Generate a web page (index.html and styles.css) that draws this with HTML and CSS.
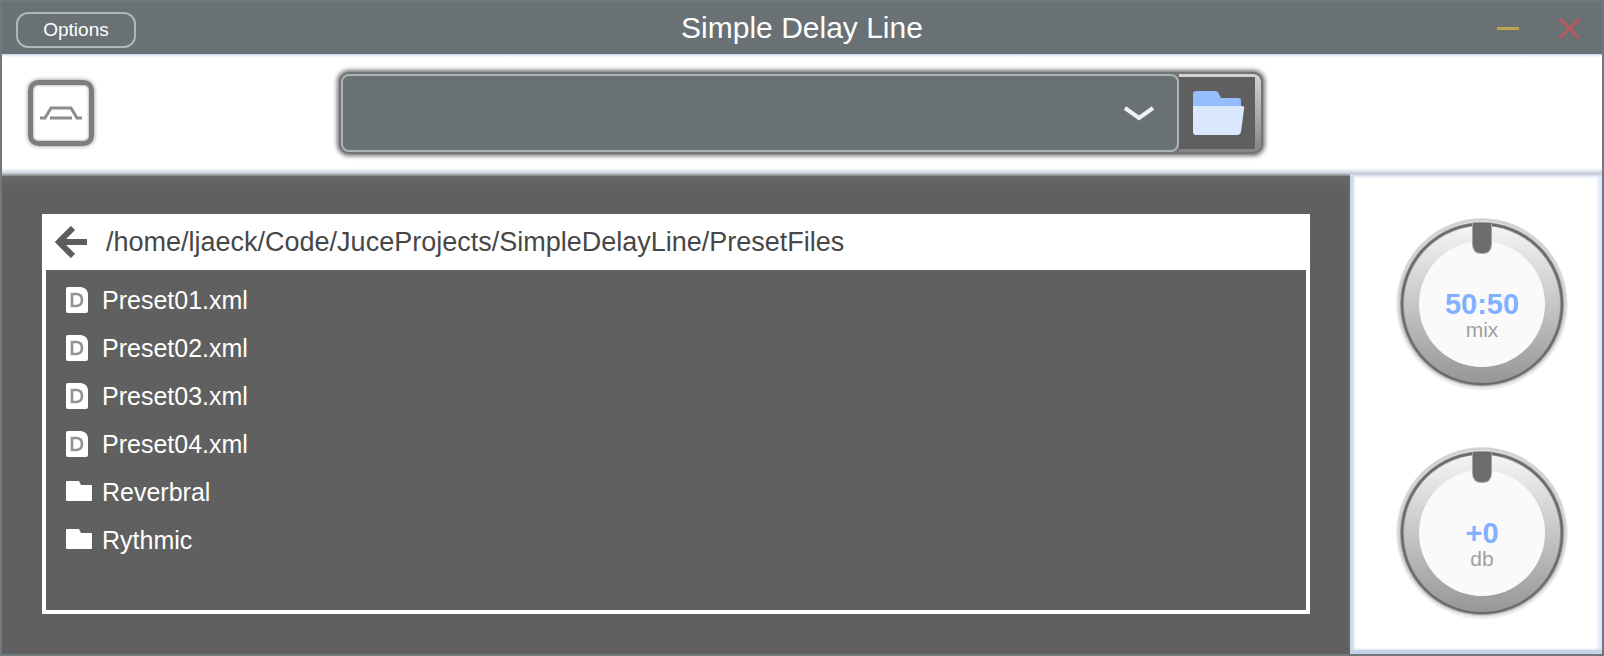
FILE: index.html
```html
<!DOCTYPE html>
<html lang="en">
<head>
<meta charset="utf-8">
<title>Simple Delay Line</title>
<link rel="stylesheet" href="styles.css">
</head>
<body>
<svg class="defs" aria-hidden="true">
  <defs>
    <linearGradient id="rim" x1="0" y1="0" x2="0" y2="1">
      <stop offset="0" stop-color="#f6f6f6"/>
      <stop offset="1" stop-color="#969696"/>
    </linearGradient>
    <symbol id="doc" viewBox="0 0 22 26">
      <path d="M2 0H15Q22 1 22 8V24Q22 26 20 26H2Q0 26 0 24V2Q0 0 2 0Z" fill="#fff"/>
      <path d="M6 7H10Q16 7 16 13Q16 19 10 19H6Z" fill="none" stroke="#939393" stroke-width="2.6"/>
    </symbol>
    <symbol id="folder" viewBox="0 0 26 20">
      <path d="M1 0H13L15 4H25Q26 4 26 5V19Q26 20 25 20H1Q0 20 0 19V1Q0 0 1 0Z" fill="#fff"/>
    </symbol>
    <symbol id="dial" viewBox="0 0 176 176">
      <circle cx="88" cy="88" r="84.5" fill="none" stroke="#eeeeee" stroke-width="3"/>
      <circle cx="88" cy="87" r="83" fill="none" stroke="#d2d2d2" stroke-width="3"/>
      <circle cx="88" cy="88" r="80" fill="url(#rim)" stroke="#a0a0a0" stroke-width="4"/>
      <circle cx="88" cy="88" r="80" fill="none" stroke="#6c6c6c" stroke-width="2.4"/>
      <circle cx="88" cy="88" r="63" fill="#fafafa"/>
      <path d="M78 7H98V28Q98 38 88 38Q78 38 78 28Z" fill="#a5a5a5"/>
      <path d="M79 7H97V28Q97 37 88 37Q79 37 79 28Z" fill="#6c6c6c"/>
    </symbol>
  </defs>
</svg>
<div class="window">
  <header class="titlebar">
    <button class="options" type="button">Options</button>
    <h1 class="title">Simple Delay Line</h1>
    <div class="controls">
      <button class="control" type="button" aria-label="Minimize"><svg width="22" height="22" viewBox="0 0 22 22"><path d="M0 11.5H22" stroke="#bda650" stroke-width="3"/></svg></button>
      <button class="control" type="button" aria-label="Close"><svg width="22" height="22" viewBox="0 0 22 22"><path d="M1 2L20 21M20 2L1 21" stroke="#bd5660" stroke-width="2.6"/></svg></button>
    </div>
  </header>
  <div class="toolbar">
    <button class="shape" type="button" aria-label="Filter shape">
      <svg width="44" height="16" viewBox="0 0 44 16"><path d="M1 13H6L12 3H32L38 13H43M11 13H33" fill="none" stroke="#8c8c8c" stroke-width="3"/></svg>
    </button>
    <div class="picker">
      <div class="combo">
        <select class="presets" aria-label="Preset"><option value=""></option></select>
        <svg class="chevron" width="32" height="16" viewBox="0 0 32 16"><path d="M2 3L16 13L30 3" fill="none" stroke="#f0f1f1" stroke-width="4"/></svg>
      </div>
      <button class="browse" type="button" aria-label="Browse presets">
        <svg width="52" height="44" viewBox="0 0 52 44"><path d="M3 0H23Q25 0 26 3L28 7H45Q48 7 48 10V20H0V3Q0 0 3 0Z" fill="#93bdfd"/><path d="M0 15H49Q52 15 51 18L48 41Q47 44 45 44H3Q0 44 0 41Z" fill="#dbe9fe"/></svg>
      </button>
    </div>
  </div>
  <div class="body">
    <main class="main">
      <section class="browser">
        <div class="pathbar">
          <button class="back" type="button" aria-label="Parent folder"><svg width="32" height="32" viewBox="0 0 32 32"><path d="M32 16H5M18 2L4 16L18 30" fill="none" stroke="#5d5d5d" stroke-width="6"/></svg></button>
          <span>/home/ljaeck/Code/JuceProjects/SimpleDelayLine/PresetFiles</span>
        </div>
        <ul class="files">
          <li><button class="file" type="button"><svg class="icon"><use href="#doc" width="22" height="26"/></svg>Preset01.xml</button></li>
          <li><button class="file" type="button"><svg class="icon"><use href="#doc" width="22" height="26"/></svg>Preset02.xml</button></li>
          <li><button class="file" type="button"><svg class="icon"><use href="#doc" width="22" height="26"/></svg>Preset03.xml</button></li>
          <li><button class="file" type="button"><svg class="icon"><use href="#doc" width="22" height="26"/></svg>Preset04.xml</button></li>
          <li><button class="file" type="button"><svg class="icon"><use href="#folder" y="2" width="26" height="20"/></svg>Reverbral</button></li>
          <li><button class="file" type="button"><svg class="icon"><use href="#folder" y="2" width="26" height="20"/></svg>Rythmic</button></li>
        </ul>
      </section>
    </main>
    <aside class="side">
      <div class="knob">
        <svg class="dial" viewBox="0 0 176 176"><use href="#dial"/></svg>
        <div class="readout"><output class="value" for="mix">50:50</output><label class="unit" for="mix">mix</label></div>
        <input class="range" id="mix" type="range" min="0" max="100" value="50">
      </div>
      <div class="knob">
        <svg class="dial" viewBox="0 0 176 176"><use href="#dial"/></svg>
        <div class="readout"><output class="value" for="gain">+0</output><label class="unit" for="gain">db</label></div>
        <input class="range" id="gain" type="range" min="-24" max="24" value="0">
      </div>
    </aside>
  </div>
</div>
</body>
</html>
```
FILE: styles.css
```css
* { box-sizing: border-box; }
body {
  margin: 0;
  font-family: "Liberation Sans", Arial, sans-serif;
}
button {
  margin: 0;
  padding: 0;
  border: 0;
  background: none;
  font: inherit;
  color: inherit;
}
svg { display: block; flex: none; }
.defs { position: absolute; width: 0; height: 0; }

.window {
  min-height: 100vh;
  display: flex;
  flex-direction: column;
  border: 2px solid #70797d;
  background: #fff;
}
.titlebar {
  display: grid;
  grid-template-columns: 1fr auto 1fr;
  align-items: center;
  height: 52px;
  padding: 0 14px;
  background: #697174;
  color: #fff;
}
.options {
  justify-self: start;
  width: 120px;
  height: 36px;
  margin-top: 4px;
  border: 2px solid #adb6b8;
  border-radius: 12px;
  font-size: 19px;
}
.title {
  margin: 0;
  font-size: 30px;
  font-weight: 400;
  line-height: 36px;
}
.controls { justify-self: end; display: flex; gap: 40px; padding-right: 7px; }

.toolbar {
  display: grid;
  grid-template-columns: 1fr auto 1fr;
  align-items: center;
  height: 122px;
  padding: 0 26px 5px;
  background: linear-gradient(#c9d4e8, #fff 3px, #fff 114px, #cdd3df 119px, #808080);
}
.shape {
  width: 66px;
  height: 66px;
  display: flex;
  align-items: center;
  justify-content: center;
  border: 5px solid #7d7d7d;
  border-radius: 10px;
  box-shadow: 0 0 4px #8c8c8c, inset 0 0 3px #8c8c8c;
}
.picker {
  display: flex;
  width: 58vw;
  max-width: 924px;
  height: 82px;
  margin-right: 2px;
  padding: 2px;
  border-radius: 10px;
  background: #747474;
  box-shadow: 0 0 4px 2px #747474;
}
.combo { position: relative; flex: 1; }
.presets {
  display: block;
  width: 100%;
  height: 100%;
  appearance: none;
  border: 2px solid #a9b4b6;
  border-radius: 8px;
  background: #697174;
  color: #fff;
  font: inherit;
  font-size: 25px;
}
.chevron {
  position: absolute;
  right: 24px;
  top: 31px;
  pointer-events: none;
}
.browse {
  width: 82px;
  display: flex;
  align-items: center;
  padding-left: 14px;
  border-radius: 0 8px 8px 0;
  background: linear-gradient(#5f5f5f, #5f5f5f) 0 3px / 76px 72px no-repeat, linear-gradient(#d4d4d4, #858585);
}

.body { flex: 1; display: flex; }
.main {
  flex: 1;
  display: flex;
  padding: 38px 38px 40px 40px;
  background: linear-gradient(#686868, #606060 12px);
  border-right: 2px solid #666;
}
.browser {
  flex: 1;
  border: 4px solid #fff;
  background: #606060;
}
.pathbar {
  display: flex;
  align-items: center;
  gap: 19px;
  height: 52px;
  padding: 0 9px 4px;
  background: #fff;
  color: #474747;
  font-size: 27px;
}
.files {
  margin: 0;
  padding: 6px 20px 0;
  list-style: none;
}
.file {
  display: flex;
  align-items: center;
  gap: 10px;
  width: 100%;
  height: 48px;
  color: #fff;
  font-size: 25px;
}
.icon { width: 26px; height: 26px; }

.side {
  width: 252px;
  display: flex;
  flex-direction: column;
  align-items: center;
  gap: 53px;
  padding: 40px 0 20px 12px;
  background: #fff;
  border-bottom: 4px solid #c6d2e8;
  box-shadow: 0 -2px #d6dce8, inset 4px 0 3px #cdd6e8, inset -4px 0 3px #dce8fc;
}
.knob { position: relative; width: 176px; height: 176px; }
.dial { width: 100%; height: 100%; }
.readout {
  position: absolute;
  inset: 74px 0 auto;
  display: flex;
  flex-direction: column;
  align-items: center;
}
.value {
  color: #80b0ff;
  font-size: 29px;
  font-weight: 700;
  line-height: 28px;
}
.unit { color: #a0a0a0; font-size: 21px; line-height: 24px; }
.range {
  position: absolute;
  inset: 0;
  width: 100%;
  height: 100%;
  margin: 0;
  opacity: 0;
}
```
